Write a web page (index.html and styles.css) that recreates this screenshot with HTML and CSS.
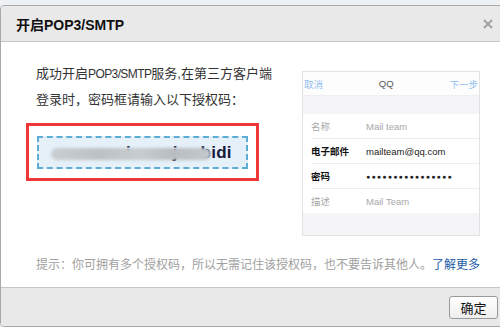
FILE: index.html
```html
<!DOCTYPE html>
<html lang="zh-CN">
<head>
  <meta charset="utf-8">
  <title>开启POP3/SMTP</title>
  <link rel="stylesheet" href="styles.css">
</head>
<body>
  <div class="dialog">
    <!-- barre de titre -->
    <div class="dialog-head">
      <span class="dialog-title">开启POP3/SMTP</span>
      <svg class="dialog-close" width="10" height="10" viewBox="0 0 10 10">
        <path d="M1 1 L9 9 M9 1 L1 9" stroke="#a3a3a3" stroke-width="2" fill="none"/>
      </svg>
    </div>

    <!-- contenu -->
    <div class="dialog-body">
      <div class="body-main">
        <div class="intro">
          <p class="intro-text">成功开启<span class="latin">POP3/SMTP</span>服务,在第三方客户端<br>登录时，密码框请输入以下授权码：</p>
          <div class="code-frame">
            <div class="code-box">
              <span class="code-text"><span class="c1">i</span><span class="c2">j</span><span class="c3">bidi</span></span>
              <span class="code-smear"></span>
            </div>
          </div>
        </div>

        <!-- aperçu du téléphone -->
        <div class="phone">
          <div class="phone-head">
            <span class="ph-link">取消</span>
            <span class="ph-title">QQ</span>
            <span class="ph-link">下一步</span>
          </div>
          <div class="phone-gap"></div>
          <div class="phone-row">
            <span class="ph-label muted">名称</span>
            <span class="ph-value muted">Mail team</span>
          </div>
          <div class="phone-row">
            <span class="ph-label strong">电子邮件</span>
            <span class="ph-value">mailteam@qq.com</span>
          </div>
          <div class="phone-row">
            <span class="ph-label strong">密码</span>
            <span class="ph-value dots">●●●●●●●●●●●●●●●●</span>
          </div>
          <div class="phone-row last">
            <span class="ph-label muted">描述</span>
            <span class="ph-value muted">Mail Team</span>
          </div>
          <div class="phone-foot"></div>
        </div>
      </div>

      <p class="hint">提示：你可拥有多个授权码，所以无需记住该授权码，也不要告诉其他人。<a href="#">了解更多</a></p>
    </div>

    <!-- pied -->
    <div class="dialog-foot">
      <button class="btn" type="button">确定</button>
    </div>
  </div>
</body>
</html>
```

FILE: styles.css
```css
/* page */
body {
  margin: 0;
  padding-top: 5px;
  background: #eef1f4;
  font-family: "Liberation Sans", "Noto Sans CJK SC", sans-serif;
  font-size: 13px;
  color: #333;
  overflow: hidden;
}

/* boîte de dialogue */
.dialog {
  width: 520px;
  background: #fff;
  border: 1px solid #a9a9a9;
  border-radius: 4px 0 0 4px;
  overflow: hidden;
}

.dialog-head {
  height: 35px;
  background: #e9e9e9;
  border-bottom: 1px solid #c6c6c6;
  display: flex;
  align-items: center;
  padding-left: 15px;
  padding-right: 28px;
}
.dialog-title {
  flex: 1;
  font-weight: bold;
  font-size: 14px;
  color: #111;
}
.dialog-close {
  display: block;
}

/* contenu */
.dialog-body {
  height: 245px;
  padding: 0 0 0 35px;
  box-sizing: border-box;
}
.body-main {
  display: flex;
  padding-top: 19px;
}
.intro {
  width: 265px;
}
.intro-text {
  margin: 0;
  line-height: 25px;
}
.latin {
  font-size: 12px;
  letter-spacing: -0.6px;
}

/* cadre rouge + code */
.code-frame {
  margin: 11px 0 0 -10px;
  width: 233px;
  height: 58px;
  border: 3px solid #f03737;
  padding: 10px 8px 9px;
  box-sizing: border-box;
}
.code-box {
  position: relative;
  height: 33px;
  background: #e6f0f8;
  border: 2px dashed #5cadd6;
  box-sizing: border-box;
  display: flex;
  align-items: center;
}
.code-text {
  font-weight: bold;
  font-size: 17px;
  color: #15183a;
  display: flex;
  padding-top: 1px;
}
.c1 { margin-left: 87px; }
.c2 { margin-left: 42px; }
.c3 { margin-left: 23px; letter-spacing: 0.3px; }
.code-smear {
  position: absolute;
  left: 12px;
  top: 10px;
  width: 160px;
  height: 12px;
  background: linear-gradient(90deg, #c9ced2, #bcc1c5 30%, #c7cdd1 55%, #b8bdc2 75%, #c3c8cc);
  border-radius: 6px;
  filter: blur(1.5px);
}

/* aperçu téléphone */
.phone {
  margin-left: 1px;
  width: 176px;
  margin-top: 10px;
  align-self: flex-start;
  border: 1px solid #e2e2e2;
  background: #fff;
  font-size: 9.5px;
}
.phone-head {
  height: 23px;
  display: flex;
  align-items: center;
  justify-content: space-between;
  padding: 0 1px;
  background: #fdfdfd;
  border-bottom: 1px solid #efefef;
}
.ph-link { color: #8fc0ef; }
.ph-title { color: #555; }
.phone-gap {
  height: 18px;
  background: #f5f5f7;
}
.phone-row {
  height: 24px;
  margin-left: 8px;
  display: flex;
  align-items: center;
  border-bottom: 1px solid #ededed;
}
.phone-row.last { border-bottom: none; }
.ph-label {
  width: 55px;
}
.ph-value { color: #222; }
.ph-label.strong { color: #111; font-weight: bold; }
.phone-row .muted { color: #a8a8a8; }
.dots { font-size: 7px; letter-spacing: 1.2px; }
.phone-foot {
  height: 22px;
  background: #f5f5f7;
}

/* astuce */
.hint {
  margin: 19px 0 0;
  font-size: 12px;
  color: #a0a0a0;
}
.hint a {
  color: #1c5ca6;
  text-decoration: none;
}

/* pied */
.dialog-foot {
  height: 38px;
  background: #e9e9e9;
  border-top: 1px solid #c6c6c6;
  display: flex;
  align-items: center;
  padding-left: 448px;
}
.btn {
  width: 49px;
  height: 23px;
  border: 1px solid #999;
  border-radius: 3px;
  background: linear-gradient(#fff, #eee);
  font-family: "Noto Sans CJK SC", sans-serif;
  font-size: 13px;
  color: #111;
  padding: 0;
}
```
